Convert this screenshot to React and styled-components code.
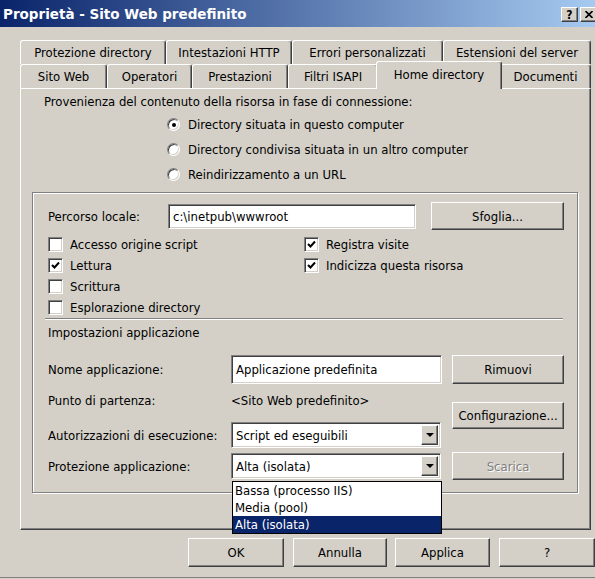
import styled, { createGlobalStyle, css } from "styled-components";

const GlobalStyle = createGlobalStyle`
  html, body {
    margin: 0;
    padding: 0;
    background: #d4d0c8;
    overflow: hidden;
  }
  body {
    font-family: "DejaVu Sans Condensed", "DejaVu Sans", sans-serif;
    font-stretch: condensed;
    font-size: 13px;
    color: #000;
  }
`;

const raised = css`
  border: 1px solid;
  border-color: #fff #404040 #404040 #fff;
  box-shadow: inset -1px -1px #808080, inset 1px 1px #d4d0c8;
`;

const sunken = css`
  border: 1px solid;
  border-color: #808080 #fff #fff #808080;
  box-shadow: inset 1px 1px #404040, inset -1px -1px #d4d0c8;
`;

const Window = styled.div`
  box-sizing: border-box;
  width: 595px;
  height: 578px;
  display: flex;
  flex-direction: column;
  border-bottom: 1px solid #808080;
  box-shadow: 0 1px #404040;
`;

const TitleBar = styled.div`
  height: 27px;
  display: flex;
  align-items: center;
  justify-content: space-between;
  padding-left: 3px;
  background: linear-gradient(to right, #0a246a, #a6caf0);
`;

const Title = styled.span`
  color: #fff;
  font-family: "DejaVu Sans", sans-serif;
  font-stretch: normal;
  font-weight: bold;
  font-size: 13.5px;
  white-space: nowrap;
`;

const CaptionButtons = styled.div`
  display: flex;
  gap: 2px;
  margin: 2px -2px 0 0;
`;

const CaptionButton = styled.div`
  box-sizing: border-box;
  width: 17px;
  height: 15px;
  ${raised};
  background: #d4d0c8;
  display: flex;
  align-items: center;
  justify-content: center;
  font-family: "DejaVu Sans", sans-serif;
  font-weight: bold;
  font-size: 12px;
  line-height: 1;
`;

const Body = styled.div`
  padding: 13px 4px 0 20px;
`;

const TabRow = styled.div`
  display: flex;
  align-items: flex-end;
  height: 24px;
`;

const Tab = styled.div`
  box-sizing: border-box;
  position: relative;
  width: ${(p) => p.$w}px;
  height: 24px;
  display: flex;
  align-items: center;
  justify-content: center;
  white-space: nowrap;
  background: #d4d0c8;
  border-top: 1px solid #fff;
  border-left: 1px solid #fff;
  border-right: 1px solid #404040;
  box-shadow: inset -1px 0 #808080;
  border-radius: 3px 3px 0 0;
  ${(p) =>
    p.$active &&
    css`
      width: ${p.$w + 4}px;
      height: 28px;
      margin: -3px -2px -1px;
      padding-bottom: 2px;
      z-index: 2;
    `}
`;

const Panel = styled.div`
  box-sizing: border-box;
  height: 442px;
  position: relative;
  ${raised};
  padding: 5px 12px 0 11px;
`;

const Heading = styled.div`
  margin-left: 12px;
  line-height: 16px;
`;

const RadioList = styled.div`
  margin: 2px 0 0 135px;
  display: flex;
  flex-direction: column;
`;

const OptionRow = styled.label`
  display: flex;
  align-items: center;
  gap: ${(p) => p.$gap || 8}px;
  height: ${(p) => p.$h || 25}px;
  white-space: nowrap;
`;

const Radio = styled.span`
  box-sizing: border-box;
  width: 13px;
  height: 13px;
  border-radius: 50%;
  ${sunken};
  background: #fff;
  display: flex;
  align-items: center;
  justify-content: center;
  &::after {
    content: "";
    width: 4px;
    height: 4px;
    border-radius: 50%;
    background: ${(p) => (p.$on ? "#000" : "transparent")};
  }
`;

const Box = styled.span`
  box-sizing: border-box;
  width: 15px;
  height: 15px;
  ${sunken};
  background: #fff;
  display: flex;
  align-items: center;
  justify-content: center;
`;

const GroupBox = styled.div`
  box-sizing: border-box;
  height: 301px;
  margin-top: 5px;
  border: 1px solid #808080;
  box-shadow: inset 1px 1px #fff, 1px 1px #fff;
  padding: 9px 0 0 15px;
`;

const Row = styled.div`
  display: flex;
  align-items: center;
  height: ${(p) => p.$h}px;
  margin-top: ${(p) => p.$mt || 0}px;
`;

const Label = styled.span`
  width: ${(p) => p.$w}px;
  flex-shrink: 0;
  white-space: nowrap;
`;

const TextBox = styled.div`
  box-sizing: border-box;
  width: ${(p) => p.$w}px;
  height: ${(p) => p.$h}px;
  ${sunken};
  background: #fff;
  padding-left: 4px;
  display: flex;
  align-items: center;
  white-space: nowrap;
  overflow: hidden;
`;

const Button = styled.div`
  box-sizing: border-box;
  width: ${(p) => p.$w}px;
  height: ${(p) => p.$h || 29}px;
  margin-left: ${(p) => p.$ml || 0}px;
  margin-top: ${(p) => p.$mt || 0}px;
  ${raised};
  background: #d4d0c8;
  display: flex;
  align-items: center;
  justify-content: center;
  white-space: nowrap;
  flex-shrink: 0;
  ${(p) =>
    p.$disabled &&
    css`
      color: #808080;
      text-shadow: 1px 1px #fff;
    `}
`;

const Checks = styled.div`
  display: flex;
  margin-top: 4px;
`;

const CheckColumn = styled.div`
  width: ${(p) => p.$w}px;
  display: flex;
  flex-direction: column;
`;

const Separator = styled.div`
  width: 518px;
  margin-left: -3px;
  border-top: 1px solid #808080;
  border-bottom: 1px solid #fff;
`;

const SectionTitle = styled.div`
  margin-top: 5px;
  line-height: 16px;
`;

const AppSection = styled.div`
  display: flex;
  margin-top: 14px;
`;

const Fields = styled.div`
  width: 394px;
  display: flex;
  flex-direction: column;
`;

const SideButtons = styled.div`
  margin-left: 10px;
  display: flex;
  flex-direction: column;
`;

const Select = styled.div`
  box-sizing: border-box;
  position: relative;
  width: 210px;
  height: 26px;
  ${sunken};
  background: #fff;
  display: flex;
  align-items: center;
  padding: 2px;
`;

const SelectText = styled.span`
  flex: 1;
  padding-left: 2px;
  white-space: nowrap;
`;

const ArrowButton = styled.span`
  box-sizing: border-box;
  width: 17px;
  height: 100%;
  ${raised};
  background: #d4d0c8;
  display: flex;
  align-items: center;
  justify-content: center;
`;

const DropList = styled.ul`
  position: absolute;
  left: 0;
  top: calc(100% + 3px);
  width: 210px;
  box-sizing: border-box;
  margin: 0;
  padding: 0;
  list-style: none;
  background: #fff;
  border: 1px solid #000;
  z-index: 5;
`;

const DropItem = styled.li`
  height: 17px;
  line-height: 17px;
  padding-left: 2px;
  white-space: nowrap;
  ${(p) =>
    p.$selected &&
    css`
      background: #0a246a;
      color: #fff;
    `}
`;

const Footer = styled.div`
  display: flex;
  margin-top: 8px;
  padding-left: 188px;
`;

const Check = () => (
  <svg width="9" height="9" viewBox="0 0 9 9">
    <path d="M1 4 L3.5 6.5 L8 1.5" fill="none" stroke="#000" strokeWidth="2" />
  </svg>
);

const Arrow = () => (
  <svg width="8" height="4" viewBox="0 0 8 4">
    <path d="M0 0 H8 L4 4 Z" fill="#000" />
  </svg>
);

const tabRows = [
  [
    { label: "Protezione directory", w: 146 },
    { label: "Intestazioni HTTP", w: 126 },
    { label: "Errori personalizzati", w: 151 },
    { label: "Estensioni del server", w: 148 },
  ],
  [
    { label: "Sito Web", w: 87 },
    { label: "Operatori", w: 85 },
    { label: "Prestazioni", w: 96 },
    { label: "Filtri ISAPI", w: 90 },
    { label: "Home directory", w: 122, active: true },
    { label: "Documenti", w: 91 },
  ],
];

const sources = [
  { label: "Directory situata in questo computer", on: true },
  { label: "Directory condivisa situata in un altro computer" },
  { label: "Reindirizzamento a un URL" },
];

const leftChecks = [
  { label: "Accesso origine script" },
  { label: "Lettura", on: true },
  { label: "Scrittura" },
  { label: "Esplorazione directory" },
];

const rightChecks = [
  { label: "Registra visite", on: true },
  { label: "Indicizza questa risorsa", on: true },
];

const protections = ["Bassa (processo IIS)", "Media (pool)", "Alta (isolata)"];

const CheckItem = ({ label, on }) => (
  <OptionRow $h={21} $gap={7}>
    <Box>{on && <Check />}</Box>
    {label}
  </OptionRow>
);

const App = () => {
  return (
    <>
      <GlobalStyle />
      <Window>
        <TitleBar>
          <Title>Proprietà - Sito Web predefinito</Title>
          <CaptionButtons>
            <CaptionButton>?</CaptionButton>
            <CaptionButton>
              <svg width="8" height="7" viewBox="0 0 8 7">
                <path d="M0.5 0 L7.5 7 M7.5 0 L0.5 7" stroke="#000" strokeWidth="1.6" />
              </svg>
            </CaptionButton>
          </CaptionButtons>
        </TitleBar>
        <Body>
          {tabRows.map((row, i) => (
            <TabRow key={i}>
              {row.map((t) => (
                <Tab key={t.label} $w={t.w} $active={t.active}>
                  {t.label}
                </Tab>
              ))}
            </TabRow>
          ))}
          <Panel>
            <Heading>Provenienza del contenuto della risorsa in fase di connessione:</Heading>
            <RadioList>
              {sources.map((s) => (
                <OptionRow key={s.label}>
                  <Radio $on={s.on} />
                  {s.label}
                </OptionRow>
              ))}
            </RadioList>
            <GroupBox>
              <Row $h={28}>
                <Label $w={120}>Percorso locale:</Label>
                <TextBox $w={248} $h={25}>{"c:\\inetpub\\wwwroot"}</TextBox>
                <Button $w={133} $h={28} $ml={15}>
                  Sfoglia...
                </Button>
              </Row>
              <Checks>
                <CheckColumn $w={256}>
                  {leftChecks.map((c) => (
                    <CheckItem key={c.label} {...c} />
                  ))}
                </CheckColumn>
                <CheckColumn $w={240}>
                  {rightChecks.map((c) => (
                    <CheckItem key={c.label} {...c} />
                  ))}
                </CheckColumn>
              </Checks>
              <Separator />
              <SectionTitle>Impostazioni applicazione</SectionTitle>
              <AppSection>
                <Fields>
                  <Row $h={29}>
                    <Label $w={183}>Nome applicazione:</Label>
                    <TextBox $w={211} $h={29}>Applicazione predefinita</TextBox>
                  </Row>
                  <Row $h={16} $mt={8}>
                    <Label $w={183}>Punto di partenza:</Label>
                    <span>&lt;Sito Web predefinito&gt;</span>
                  </Row>
                  <Row $h={26} $mt={14}>
                    <Label $w={183}>Autorizzazioni di esecuzione:</Label>
                    <Select>
                      <SelectText>Script ed eseguibili</SelectText>
                      <ArrowButton>
                        <Arrow />
                      </ArrowButton>
                    </Select>
                  </Row>
                  <Row $h={26} $mt={5}>
                    <Label $w={183}>Protezione applicazione:</Label>
                    <Select>
                      <SelectText>Alta (isolata)</SelectText>
                      <ArrowButton>
                        <Arrow />
                      </ArrowButton>
                      <DropList>
                        {protections.map((p, i) => (
                          <DropItem key={p} $selected={i === protections.length - 1}>
                            {p}
                          </DropItem>
                        ))}
                      </DropList>
                    </Select>
                  </Row>
                </Fields>
                <SideButtons>
                  <Button $w={112} $h={29}>
                    Rimuovi
                  </Button>
                  <Button $w={112} $h={27} $mt={18}>
                    Configurazione...
                  </Button>
                  <Button $w={112} $h={28} $mt={23} $disabled>
                    Scarica
                  </Button>
                </SideButtons>
              </AppSection>
            </GroupBox>
          </Panel>
        </Body>
        <Footer>
          <Button $w={96}>OK</Button>
          <Button $w={94} $ml={9}>
            Annulla
          </Button>
          <Button $w={95} $ml={8}>
            Applica
          </Button>
          <Button $w={96} $ml={9}>
            ?
          </Button>
        </Footer>
      </Window>
    </>
  );
};

export default App;
